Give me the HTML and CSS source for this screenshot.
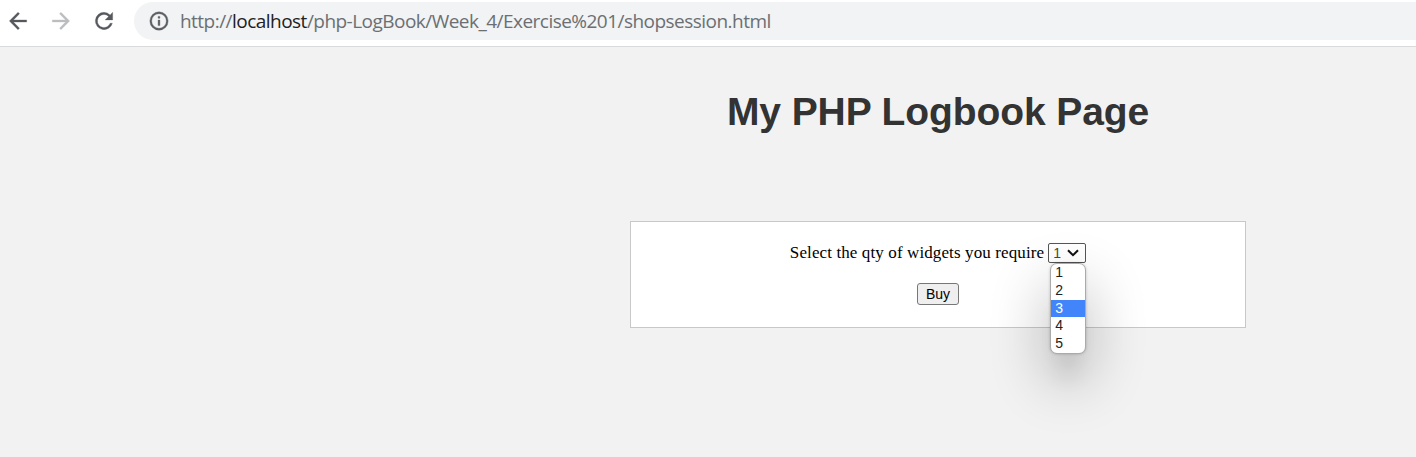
FILE: index.html
```html
<!DOCTYPE html>
<html lang="en">
<head>
<meta charset="utf-8">
<title>My PHP Logbook Page</title>
<link rel="stylesheet" href="styles.css">
</head>
<body>
<header class="toolbar">
  <nav class="nav">
    <svg class="icon" viewBox="0 0 24 24"><path d="M20 11H7.83l5.59-5.59L12 4l-8 8 8 8 1.41-1.41L7.83 13H20z"/></svg>
    <svg class="icon icon-off" viewBox="0 0 24 24"><path d="M4 11h12.17l-5.59-5.59L12 4l8 8-8 8-1.41-1.41L16.17 13H4z"/></svg>
    <svg class="icon icon-reload" viewBox="0 0 24 24"><path d="M17.65 6.35A7.96 7.96 0 0 0 12 4a8 8 0 1 0 7.73 10h-2.08A6 6 0 1 1 12 6c1.66 0 3.14.69 4.22 1.78L13 11h7V4z"/></svg>
  </nav>
  <div class="address">
    <svg class="info" viewBox="0 0 24 24"><path d="M11 7h2v2h-2zm0 4h2v6h-2zm1-9a10 10 0 1 0 0 20 10 10 0 0 0 0-20zm0 18a8 8 0 1 1 0-16 8 8 0 0 1 0 16z"/></svg>
    <span class="url">http://<span class="host">localhost</span>/php-LogBook/Week_4/Exercise%201/shopsession.html</span>
  </div>
</header>
<main class="page">
  <h1 class="title">My PHP Logbook Page</h1>
  <form class="panel">
    <div class="row">
      <span class="label">Select the qty of widgets you require</span>
      <div class="select">
        <span class="value">1</span>
        <svg class="chevron" viewBox="0 0 12 8"><path d="M1 1.2l5 5 5-5"/></svg>
        <ul class="options">
          <li>1</li>
          <li>2</li>
          <li class="active">3</li>
          <li>4</li>
          <li>5</li>
        </ul>
      </div>
    </div>
    <button class="buy" type="button">Buy</button>
  </form>
</main>
</body>
</html>
```
FILE: styles.css
```css
* { box-sizing: border-box; }
body {
  margin: 0;
  height: 457px;
  overflow: hidden;
  background: #f2f2f2;
}
.toolbar {
  display: flex;
  height: 47px;
  padding-top: 2px;
  background: #fff;
  border-bottom: 1px solid #d9dadb;
}
.nav {
  display: flex;
  align-items: center;
  width: 134px;
  height: 38px;
  padding-left: 5px;
  gap: 17px;
}
.icon { width: 26px; height: 26px; fill: #55585c; stroke: #55585c; stroke-width: .25; }
.icon-off { fill: #bcbdbf; stroke: #bcbdbf; }
.address {
  display: flex;
  flex: 1;
  align-items: center;
  height: 38px;
  padding-left: 14px;
  gap: 10px;
  background: #f1f3f4;
  border-radius: 19px 0 0 19px;
}
.info { width: 22px; height: 22px; fill: #5b5e63; stroke: #5b5e63; stroke-width: .4; }
.url {
  font: 19px/38px "Open Sans", sans-serif;
  letter-spacing: -.53px;
  color: #6b6f73;
  white-space: nowrap;
}
.host { color: #202124; }
.page {
  display: flex;
  flex-direction: column;
  align-items: center;
  width: 616px;
  margin-left: 630px;
}
.title {
  margin: 42px 0 0;
  font: bold 39px/46px "Liberation Sans", Arial, sans-serif;
  letter-spacing: -.1px;
  color: #333;
  white-space: nowrap;
}
.panel {
  display: flex;
  flex-direction: column;
  align-items: center;
  width: 616px;
  height: 107px;
  margin: 86px 0 0;
  padding-top: 21px;
  background: #fff;
  border: 1px solid #c8c8c8;
}
.row { display: flex; gap: 4px; }
.label {
  font: 17px/20px "Liberation Serif", "Times New Roman", serif;
  letter-spacing: .11px;
  color: #000;
  white-space: nowrap;
}
.select {
  position: relative;
  display: flex;
  align-items: center;
  width: 38px;
  height: 20px;
  padding-left: 4px;
  gap: 6px;
  border: 1px solid #555;
  border-radius: 2px;
  font: 14px/18px "Liberation Sans", Arial, sans-serif;
  color: #222;
}
.value { color: #3c5230; }
.chevron { width: 12px; height: 8px; fill: none; stroke: #111; stroke-width: 2; }
.options {
  position: absolute;
  top: 19px;
  left: 1px;
  width: 36px;
  height: 91px;
  margin: 0;
  padding: 0;
  list-style: none;
  background: #fff;
  border: 1px solid #aaa;
  border-radius: 7px;
  box-shadow: 0 34px 22px -12px rgba(0, 0, 0, .14), 0 24px 56px 4px rgba(0, 0, 0, .24), 0 0 3px rgba(0, 0, 0, .2);
  line-height: 17.8px;
}
.options li { padding-left: 4px; }
.options .active { background: #4285fb; color: #fff; }
.buy {
  width: 42px;
  height: 22px;
  margin-top: 20px;
  padding: 0;
  border: 1px solid #777;
  border-radius: 3px;
  background: #efefef;
  font: 14px/20px "Liberation Sans", Arial, sans-serif;
  color: #000;
}
```
